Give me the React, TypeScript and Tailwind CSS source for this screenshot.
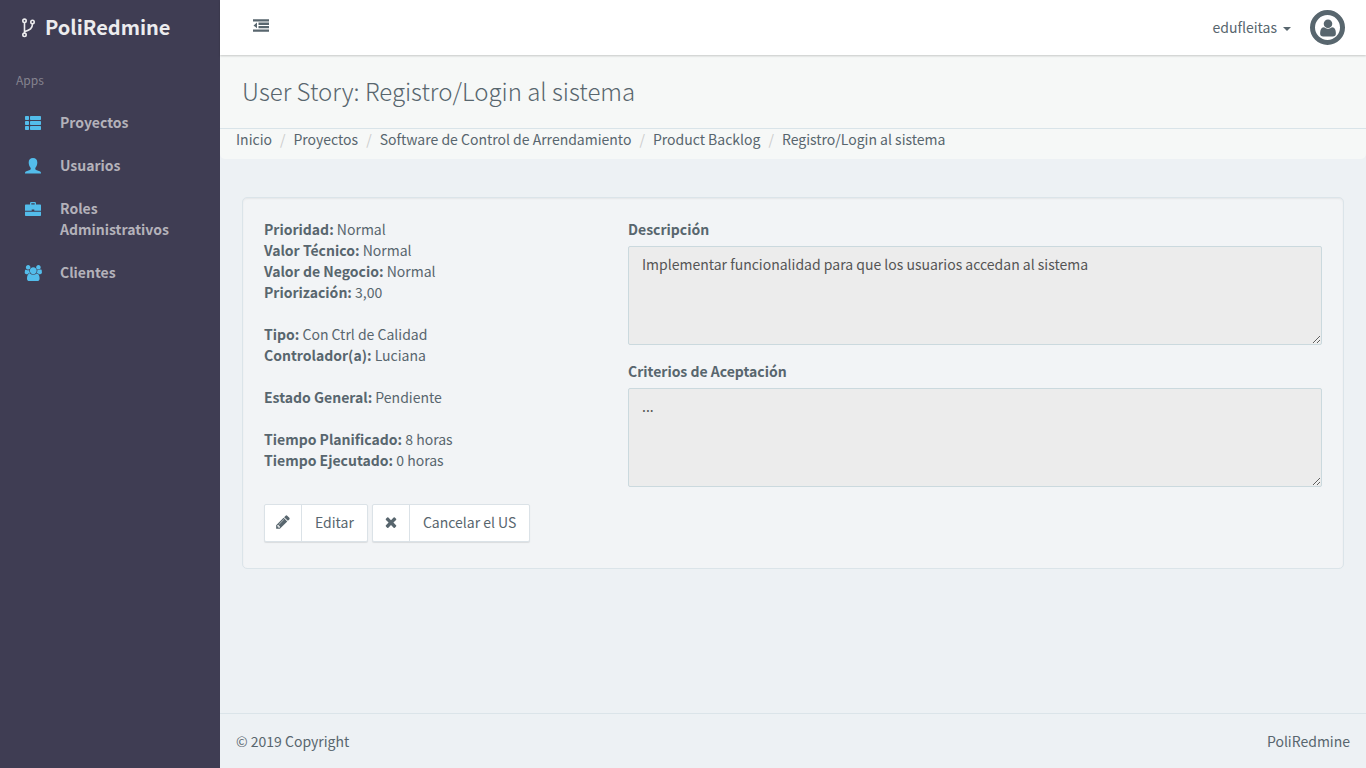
import type { ReactNode } from "react";

function Icon({ box, className, children }: { box: string; className: string; children: ReactNode }) {
  return (
    <svg viewBox={box} fill="currentColor" aria-hidden="true" className={className}>
      {children}
    </svg>
  );
}

function ForkIcon() {
  return (
    <svg viewBox="0 0 14 20" fill="none" stroke="currentColor" strokeWidth="1.6" aria-hidden="true" className="h-5 w-3.5">
      <circle cx="3.500" cy="2.800" r="1.700" />
      <circle cx="3.500" cy="16.800" r="1.700" />
      <circle cx="11.500" cy="4" r="1.700" />
      <path d="M3.500 4.500v10.600M11.500 5.800c0 4.700-2.500 6.200-8 8" />
    </svg>
  );
}

function ListIcon() {
  return (
    <Icon box="0 0 16 14" className="h-3.5 w-4">
      <rect x="0" y="0" width="4" height="4" rx=".7" />
      <rect x="5" y="0" width="11" height="4" rx=".7" />
      <rect x="0" y="5" width="4" height="4" rx=".7" />
      <rect x="5" y="5" width="11" height="4" rx=".7" />
      <rect x="0" y="10" width="4" height="4" rx=".7" />
      <rect x="5" y="10" width="11" height="4" rx=".7" />
    </Icon>
  );
}

function PersonIcon() {
  return (
    <Icon box="0 0 16 16" className="size-4">
      <path d="M8 0c2.800 0 4.300 1.700 4.300 4.400 0 2-.7 4.200-2 5.500v1c0 .5.300.8.800 1l3.500 1.400c.9.400 1.400 1 1.400 1.900v.3H0v-.3c0-.9.500-1.500 1.400-1.900l3.500-1.400c.5-.2.800-.5.800-1v-1c-1.300-1.300-2-3.500-2-5.500C3.700 1.700 5.200 0 8 0z" />
    </Icon>
  );
}

function BriefcaseIcon() {
  return (
    <Icon box="0 0 16 16" className="size-4">
      <path d="M5 3.500V2.300C5 1.400 5.700 1 6.500 1h3c.8 0 1.500.4 1.500 1.300v1.200h4c.6 0 1 .4 1 1v5.300H9.300V8.500H6.700v1.300H0V4.500c0-.6.400-1 1-1zM6.300 3.500h3.400V2.300H6.300z" />
      <path d="M0 10.700h16V14c0 .6-.4 1-1 1H1c-.6 0-1-.4-1-1z" />
    </Icon>
  );
}

function UsersIcon() {
  return (
    <Icon box="0 0 1984 1792" className="h-4 w-[18px]">
      <path d="M657 896q-162 5-265 128h-134q-82 0-138-40.5t-56-118.5q0-353 124-353 6 0 43.5 21t97.5 42.5 119 21.5q67 0 133-23-5 37-5 66 0 159 93 293zm1071 637q0 120-73 189.500t-194 69.500h-874q-121 0-194-69.500t-73-189.500q0-53 3.500-103.500t14-109 26.500-108.500 43-97.500 62-81 85.500-53.500 111.500-20q10 0 43 21.500t73 48 107 48 135 21.500 135-21.500 107-48 73-48 43-21.500q61 0 111.500 20t85.500 53.500 62 81 43 97.500 26.500 108.500 14 109 3.500 103.500zm-1024-1277q0 106-75 181t-181 75-181-75-75-181 75-181 181-75 181 75 75 181zm704 384q0 159-112.500 271.500t-271.500 112.500-271.500-112.500-112.500-271.500 112.500-271.500 271.500-112.500 271.500 112.500 112.500 271.500zm576 225q0 78-56 118.500t-138 40.500h-134q-103-123-265-128 93-134 93-293 0-29-5-66 66 23 133 23 59 0 119-21.500t97.500-42.500 43.500-21q124 0 124 353zm-128-609q0 106-75 181t-181 75-181-75-75-181 75-181 181-75 181 75 75 181z" />
    </Icon>
  );
}

function OutdentIcon() {
  return (
    <Icon box="0 0 16 13" className="h-[13px] w-4">
      <path d="M0 .3h16v2.300H0zM5.500 3.600h10.500v2.300H5.500zM5.500 6.900h10.500v2.300H5.500zM0 10.400h16v2.300H0zM4 3.600v5.600L.5 6.400z" />
    </Icon>
  );
}

function PencilIcon() {
  return (
    <Icon box="0 0 1792 1792" className="size-4">
      <path d="M491 1536l91-91-235-235-91 91v107h128v128h107zm523-928q0-22-22-22-10 0-17 7l-542 542q-7 7-7 17 0 22 22 22 10 0 17-7l542-542q7-7 7-17zm-54-192l416 416-832 832h-416v-416zm683 96q0 53-37 90l-166 166-416-416 166-165q36-38 90-38 53 0 91 38l235 234q37 39 37 91z" />
    </Icon>
  );
}

function TimesIcon() {
  return (
    <Icon box="0 0 1792 1792" className="size-4">
      <path d="M1490 1322q0 40-28 68l-136 136q-28 28-68 28t-68-28l-294-294-294 294q-28 28-68 28t-68-28l-136-136q-28-28-28-68t28-68l294-294-294-294q-28-28-28-68t28-68l136-136q28-28 68-28t68 28l294 294 294-294q28-28 68-28t68 28l136 136q28 28 28 68t-28 68l-294 294 294 294q28 28 28 68z" />
    </Icon>
  );
}

function UserIcon() {
  return (
    <Icon box="0 0 1792 1792" className="size-5">
      <path d="M1600 1405q0 120-73 189.500t-194 69.500h-874q-121 0-194-69.500t-73-189.500q0-53 3.500-103.500t14-109 26.500-108.500 43-97.500 62-81 85.500-53.500 111.500-20q9 0 42 21.500t74.500 48 108 48 133.500 21.500 133.500-21.500 108-48 74.500-48 42-21.500q61 0 111.500 20t85.500 53.500 62 81 43 97.500 26.500 108.500 14 109 3.500 103.500zm-320-893q0 159-112.500 271.500t-271.500 112.500-271.500-112.500-112.500-271.500 112.500-271.500 271.500-112.500 271.500 112.500 112.500 271.500z" />
    </Icon>
  );
}

const navItems = [
  { label: "Proyectos", icon: <ListIcon /> },
  { label: "Usuarios", icon: <PersonIcon /> },
  { label: "Roles Administrativos", icon: <BriefcaseIcon /> },
  { label: "Clientes", icon: <UsersIcon /> },
];

const crumbs = [
  "Inicio",
  "Proyectos",
  "Software de Control de Arrendamiento",
  "Product Backlog",
  "Registro/Login al sistema",
];

const detailGroups = [
  [
    ["Prioridad", "Normal"],
    ["Valor Técnico", "Normal"],
    ["Valor de Negocio", "Normal"],
    ["Priorización", "3,00"],
  ],
  [
    ["Tipo", "Con Ctrl de Calidad"],
    ["Controlador(a)", "Luciana"],
  ],
  [["Estado General", "Pendiente"]],
  [
    ["Tiempo Planificado", "8 horas"],
    ["Tiempo Ejecutado", "0 horas"],
  ],
];

function Sidebar() {
  return (
    <aside className="w-[220px] shrink-0 bg-[#3f3d53]">
      <a href="#" className="flex h-[55px] items-center gap-2.5 pl-[21px] text-xl leading-[30px] font-bold text-[#ececee]">
        <ForkIcon />
        <span className="pb-px">PoliRedmine</span>
      </a>
      <p className="mt-3.5 pl-4 text-xs leading-[21px] text-[#85838f]">Apps</p>
      <nav className="mt-[11px]">
        {navItems.map(({ label, icon }) => (
          <a key={label} href="#" className="flex py-[11px] leading-[21px] font-bold text-[#b4b2ba]">
            <span className="ml-4 flex h-[21px] w-[34px] shrink-0 items-center justify-center text-[#53bdeb]">{icon}</span>
            <span className="mr-10 ml-2.5">{label}</span>
          </a>
        ))}
      </nav>
    </aside>
  );
}

function ActionButton({ icon, label }: { icon: ReactNode; label: string }) {
  return (
    <button type="button" className="flex h-[38px] rounded-xs border border-[#dbe2e7] bg-white shadow-[0_1px_1px_rgba(90,90,90,0.15)]">
      <span className="flex w-[37px] items-center justify-center self-stretch border-r border-[#dbe2e7] pb-0.5">{icon}</span>
      <span className="self-center px-[13px] pb-0.5">{label}</span>
    </button>
  );
}

function ReadOnlyField({ id, label, value }: { id: string; label: string; value: string }) {
  return (
    <div>
      <label htmlFor={id} className="mb-1.5 block leading-[21px] font-bold">
        {label}
      </label>
      <textarea
        id={id}
        readOnly
        defaultValue={value}
        className="block h-[99px] w-full rounded-xs border border-[#cbd9de] bg-[#ececec] px-[13px] py-[7px] leading-[21px] text-[#555] outline-none"
      />
    </div>
  );
}

export default function App() {
  return (
    <div className="flex min-h-screen bg-[#edf1f4] font-['Noto_Sans_CJK_SC',sans-serif] text-sm text-[#58666e]">
      <Sidebar />
      <div className="flex min-w-0 flex-1 flex-col">
        <header className="relative flex h-[55px] items-center justify-between bg-white pr-[21px] pl-[33px] shadow-[0_1px_2px_rgba(0,0,0,0.2)]">
          <button type="button" aria-label="Contraer menú" className="pb-1">
            <OutdentIcon />
          </button>
          <button type="button" className="flex items-center">
            <span className="pb-0.5">edufleitas</span>
            <span className="mt-0.5 ml-1.5 border-x-4 border-t-4 border-x-transparent border-t-current" />
            <span className="ml-[19px] flex size-[35px] items-center justify-center rounded-full border-[5px] border-current">
              <UserIcon />
            </span>
          </button>
        </header>
        <div className="rounded-b-[5px] bg-[#f6f8f7]">
          <h1 className="border-b border-[#d9e4e9] px-[22px] pt-[21px] pb-[22px] text-2xl leading-[30px] font-light">
            User Story: Registro/Login al sistema
          </h1>
          <nav aria-label="Ruta">
            <ol className="flex h-[30px] px-4 leading-[21px]">
              {crumbs.map((crumb, index) => (
                <li key={crumb} className="flex">
                  {index > 0 && <span className="px-2 text-[#ccc]">/</span>}
                  <a href="#">{crumb}</a>
                </li>
              ))}
            </ol>
          </nav>
        </div>
        <main className="flex-1 px-[22px] pt-[38px] pb-10">
          <section className="rounded-[5px] border border-[#dbe4e9] bg-[#f2f4f6] px-[21px] pt-[21px] pb-[26px] shadow-[inset_0_1px_2px_rgba(0,0,0,0.06)]">
            <div className="-mx-[17px] flex">
              <div className="w-1/3 px-[17px]">
                <div className="flex flex-col gap-[21px] leading-[21px]">
                  {detailGroups.map((group) => (
                    <div key={group[0][0]}>
                      {group.map(([name, value]) => (
                        <p key={name}>
                          <strong className="font-bold">{name}:</strong> {value}
                        </p>
                      ))}
                    </div>
                  ))}
                </div>
                <div className="mt-[33px] flex gap-1">
                  <ActionButton icon={<PencilIcon />} label="Editar" />
                  <ActionButton icon={<TimesIcon />} label="Cancelar el US" />
                </div>
              </div>
              <div className="flex w-2/3 flex-col gap-4 px-[17px]">
                <ReadOnlyField id="descripcion" label="Descripción" value="Implementar funcionalidad para que los usuarios accedan al sistema" />
                <ReadOnlyField id="criterios" label="Criterios de Aceptación" value="..." />
              </div>
            </div>
          </section>
        </main>
        <footer className="flex h-[55px] items-center justify-between border-t border-[#dbe4e9] px-4">
          <span>© 2019 Copyright</span>
          <span>PoliRedmine</span>
        </footer>
      </div>
    </div>
  );
}
